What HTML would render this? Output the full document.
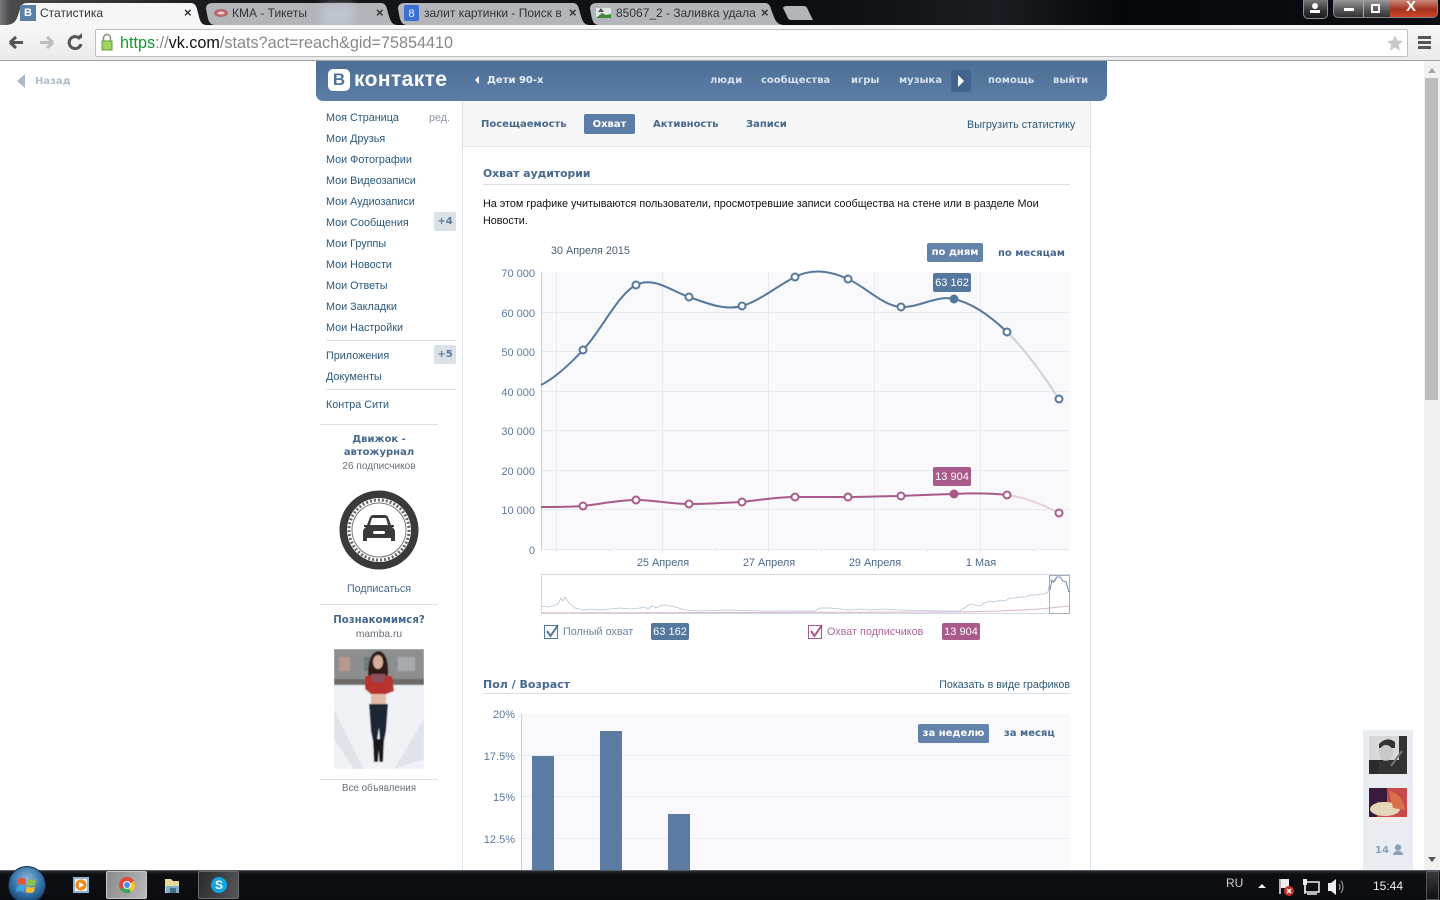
<!DOCTYPE html>
<html><head><meta charset="utf-8"><style>
html,body{margin:0;padding:0;background:#fff;width:1440px;height:900px;overflow:hidden}
body{position:relative;font-family:"Liberation Sans","DejaVu Sans",sans-serif;font-size:11px;color:#2b587a}
.t{position:absolute;white-space:nowrap;line-height:14px;height:14px}
.b{position:absolute}
.bd{font-family:"DejaVu Sans","Liberation Sans",sans-serif;font-weight:bold;font-size:10px}
.m{font-size:10.8px;left:326px;color:#2b587a}
.ax{font-size:11px;color:#5b7a9c;text-align:right;width:60px}
.xl{font-size:10.9px;color:#4a6a8c;text-align:center;width:80px}
.tab{font-size:12px;color:#333}
.x{font-size:12px;color:#333;font-weight:bold}
svg{position:absolute;left:0;top:0}
</style></head><body>
<!-- window frame -->
<div class="b" style="left:0;top:0;width:1440px;height:25px;background:linear-gradient(90deg,#77787a 0,#4a4b4d 10px,#16181b 220px,#0c0e12 800px,#191c20 1000px,#05070b 1120px,#0b0e12 1440px)"></div>
<svg width="1440" height="62">
<path d="M398 25 C391 25 390 20 387 9 C386 5 384 3 381 3 H213 C208 3 206 5 206 9 C208 18 208 25 215 25 Z" fill="#b2b5ba"/>
<path d="M590 25 C583 25 582 20 579 9 C578 5 576 3 573 3 H405 C400 3 398 5 398 9 C400 18 400 25 407 25 Z" fill="#b2b5ba"/>
<path d="M785 25 C776 25 775 20 771 9 C770 5 768 3 765 3 H597 C592 3 590 5 590 9 C592 18 592 25 599 25 Z" fill="#b2b5ba"/>
<path d="M207 25 C200 25 200 20 197 9 C196 5 194 3 191 3 H27 C23 3 21 5 20 9 C17 20 15 25 5 25 Z" fill="#f6f6f6"/>
<path d="M787 6 H803 C806 6 807 7 808 10 L813 20 H792 C789 20 788 19 787 16 L783 8 C783 7 785 6 787 6 Z" fill="#b2b5ba"/>
</svg>
<div class="b" style="left:20px;top:5px;width:16px;height:16px;background:#5b7fa6;color:#fff;font:bold 11px/16px 'Liberation Sans';text-align:center">В</div>
<div class="t tab" style="left:40px;top:6px">Статистика</div>
<div class="t x" style="left:184px;top:6px;font-size:13px">×</div>
<svg width="20" height="20" style="left:212px;top:4px"><ellipse cx="9" cy="9" rx="7" ry="4" fill="#b86a6a"/><ellipse cx="9" cy="9" rx="3.5" ry="1.5" fill="#e8d0d0"/></svg>
<div class="t tab" style="left:232px;top:6px">КМА - Тикеты</div>
<div class="b" style="left:322px;top:5px;width:32px;height:20px;background:#bfc4cf;filter:blur(4px)"></div>
<div class="t x" style="left:376px;top:6px;font-size:13px">×</div>
<div class="b" style="left:404px;top:5px;width:15px;height:16px;background:#3b6fd0;color:#fff;font:12px/16px 'Liberation Serif';text-align:center;border-radius:2px">8</div>
<div class="t tab" style="left:424px;top:6px;width:140px;overflow:hidden">залит картинки - Поиск в</div>
<div class="t x" style="left:569px;top:6px;font-size:13px">×</div>
<svg width="18" height="14" style="left:595px;top:6px"><rect x="1" y="2" width="15" height="10" fill="#dfe6e8"/><path d="M1 12 L7 7 L11 9 L16 8 V12 Z" fill="#3f8a3a"/><path d="M3 6 L6 2 L9 6 Z" fill="#555"/></svg>
<div class="t tab" style="left:616px;top:6px;width:140px;overflow:hidden">85067_2 - Заливка удалас</div>
<div class="t x" style="left:761px;top:6px;font-size:13px">×</div>
<!-- window buttons -->
<div class="b" style="left:1303px;top:0;width:23px;height:18px;border:1px solid #8a8f96;border-top:0;border-radius:0 0 5px 5px;background:linear-gradient(#777,#333 60%,#1a1a1a)"></div>
<svg width="18" height="14" style="left:1306px;top:2px"><circle cx="9" cy="4" r="3" fill="#fff"/><rect x="4" y="8" width="10" height="3" fill="#fff"/></svg>
<div class="b" style="left:1333px;top:0;width:103px;height:17px;border:1px solid #888;border-top:0;border-radius:0 0 5px 5px;background:linear-gradient(#9a9a9a,#555 60%,#333);overflow:hidden">
 <div class="b" style="left:29px;top:0;bottom:0;width:1px;background:#aaa"></div>
 <div class="b" style="left:56px;top:0;width:47px;height:17px;background:linear-gradient(#c98a7c,#a5321e 55%,#d0452a)"></div>
 <div class="b" style="left:10px;top:8px;width:10px;height:3px;background:#fff"></div>
 <div class="b" style="left:37px;top:4px;width:5px;height:5px;border:2px solid #fff"></div>
 <div class="b" style="left:72px;top:-1px;color:#fff;font:bold 15px/16px 'Liberation Sans'">X</div>
</div>
<!-- toolbar -->
<div class="b" style="left:0;top:25px;width:1440px;height:35px;background:linear-gradient(#f7f7f7,#ebebeb);border-bottom:1px solid #a3a3a3"></div>
<svg width="100" height="60">
<path d="M10 42.5 H23 M10 42.5 L16 37 M10 42.5 L16 48" stroke="#555" stroke-width="3" fill="none"/>
<path d="M53 42.5 H40 M53 42.5 L47 37 M53 42.5 L47 48" stroke="#bdbdbd" stroke-width="3" fill="none"/>
<path d="M80 39 A6 6 0 1 0 81 44" stroke="#555" stroke-width="3" fill="none"/><path d="M76 38 H82 V33 Z" fill="#555"/>
</svg>
<div class="b" style="left:95px;top:29px;height:26px;background:#fff;border:1px solid #bfbfbf;border-radius:2px;width:1311px"></div>
<svg width="14" height="18" style="left:100px;top:33px"><path d="M3.5 8 V5 A3.5 3.5 0 0 1 10.5 5 V8" stroke="#8a8f7a" stroke-width="1.5" fill="none"/><rect x="2" y="8" width="10" height="9" fill="#9fd45e" stroke="#6a9a3a"/></svg>
<div class="t" style="left:120px;top:35px;font-size:16.2px;line-height:16px;height:16px"><span style="color:#0a9c2a">https</span><span style="color:#888">://</span><span style="color:#111">vk.com</span><span style="color:#888">/stats?act=reach&amp;gid=75854410</span></div>
<svg width="18" height="18" style="left:1386px;top:34px"><path d="M9 1 L11.4 6.4 L17 7 L12.8 10.8 L14 16.5 L9 13.6 L4 16.5 L5.2 10.8 L1 7 L6.6 6.4 Z" fill="#c9c9c9"/></svg>
<div class="b" style="left:1418px;top:36px;width:13px;height:3px;background:#555;box-shadow:0 5px 0 #555,0 10px 0 #555"></div>
<!-- scrollbar -->
<div class="b" style="left:1424px;top:61px;width:16px;height:809px;background:#f1f1f1"></div>
<div class="b" style="left:1425px;top:78px;width:13px;height:322px;background:#bcbcbc"></div>
<svg width="16" height="809" style="left:1424px;top:61px"><path d="M4 12 L8 7 L12 12 Z" fill="#a8a8a8"/><path d="M4 796 L8 801 L12 796 Z" fill="#555"/></svg>
<!-- back -->
<svg width="12" height="16" style="left:15px;top:73px"><path d="M10 1 L2 8 L10 15 Z" fill="#a9b9ca"/></svg>
<div class="t bd" style="left:35px;top:75px;color:#aebccb;font-size:10px">Назад</div>
<!-- header -->
<div class="b" style="left:316px;top:61px;width:791px;height:40px;border-radius:0 0 7px 7px;background:linear-gradient(#4d6e95,#5c7da5)"></div>
<div class="b" style="left:328px;top:69px;width:22px;height:22px;border-radius:5px;background:#fff;color:#50729a;font:bold 17px/22px 'Liberation Sans';text-align:center">В</div>
<div class="t" style="left:354px;top:70px;height:20px;font:bold 21px/20px 'Liberation Sans';color:#fff;letter-spacing:.4px">контакте</div>
<svg width="8" height="10" style="left:473px;top:75px"><path d="M6 1 L2 5 L6 9 Z" fill="#fff"/></svg>
<div class="t bd" style="left:487px;top:74px;color:#e8eef5">Дети 90-х</div>
<div class="t bd" style="left:710px;top:74px;color:#d5e0ec">люди</div>
<div class="t bd" style="left:761px;top:74px;color:#d5e0ec">сообщества</div>
<div class="t bd" style="left:851px;top:74px;color:#d5e0ec">игры</div>
<div class="t bd" style="left:899px;top:74px;color:#d5e0ec">музыка</div>
<div class="b" style="left:951px;top:70px;width:20px;height:22px;background:#43658d;border-radius:3px"></div>
<svg width="10" height="14" style="left:956px;top:74px"><path d="M2 1 L8 7 L2 13 Z" fill="#fff"/></svg>
<div class="t bd" style="left:988px;top:74px;color:#d5e0ec">помощь</div>
<div class="t bd" style="left:1053px;top:74px;color:#d5e0ec">выйти</div>
<!-- sidebar -->
<div class="t m" style="top:111px">Моя Страница</div>
<div class="t" style="left:429px;top:111px;color:#8a97a5;font-size:10.8px">ред.</div>
<div class="t m" style="top:132px">Мои Друзья</div>
<div class="t m" style="top:153px">Мои Фотографии</div>
<div class="t m" style="top:174px">Мои Видеозаписи</div>
<div class="t m" style="top:195px">Мои Аудиозаписи</div>
<div class="t m" style="top:216px">Мои Сообщения</div>
<div class="b bd" style="left:434px;top:212px;width:22px;height:19px;line-height:20px;background:#dae2e8;border-radius:2px;text-align:center;color:#5b7a9c">+4</div>
<div class="t m" style="top:237px">Мои Группы</div>
<div class="t m" style="top:258px">Мои Новости</div>
<div class="t m" style="top:279px">Мои Ответы</div>
<div class="t m" style="top:300px">Мои Закладки</div>
<div class="t m" style="top:321px">Мои Настройки</div>
<div class="b" style="left:326px;top:340px;width:130px;height:1px;background:#dae1e8"></div>
<div class="t m" style="top:349px">Приложения</div>
<div class="b bd" style="left:434px;top:345px;width:22px;height:19px;line-height:20px;background:#dae2e8;border-radius:2px;text-align:center;color:#5b7a9c">+5</div>
<div class="t m" style="top:370px">Документы</div>
<div class="b" style="left:326px;top:389px;width:130px;height:1px;background:#dae1e8"></div>
<div class="t m" style="top:398px">Контра Сити</div>
<div class="b" style="left:320px;top:424px;width:118px;height:1px;background:#dae1e8"></div>
<div class="t bd" style="left:320px;width:118px;text-align:center;top:433px;color:#45688e">Движок -</div>
<div class="t bd" style="left:320px;width:118px;text-align:center;top:446px;color:#45688e">автожурнал</div>
<div class="t" style="left:320px;width:118px;text-align:center;top:460px;color:#666f7a;font-size:10.1px">26 подписчиков</div>
<svg width="84" height="84" style="left:337px;top:488px">
<circle cx="42" cy="42" r="39.5" fill="#3a3a3c"/><circle cx="42" cy="42" r="32" fill="#fff"/><circle cx="42" cy="42" r="30" fill="none" stroke="#666" stroke-width="3" stroke-dasharray="2 2"/><circle cx="42" cy="42" r="27" fill="none" stroke="#777" stroke-width="1"/><circle cx="42" cy="42" r="25" fill="#fff"/>
<path d="M30 37 L33 29 Q34 27 37 27 H47 Q50 27 51 29 L54 37 H57 V39 H55 Q58 41 58 44 V53 H54 V50 H30 V53 H26 V44 Q26 41 29 39 H27 V37 Z" fill="#3a3a3c"/><path d="M33 37 L35 30 H49 L51 37 Z" fill="#fff"/><rect x="36" y="43" width="12" height="3" rx="1.5" fill="#fff"/>
</svg>
<div class="t" style="left:320px;width:118px;text-align:center;top:582px;color:#45688e;font-size:10.7px">Подписаться</div>
<div class="b" style="left:320px;top:604px;width:118px;height:1px;background:#dae1e8"></div>
<div class="t bd" style="left:320px;width:118px;text-align:center;top:614px;color:#45688e;font-size:10.2px">Познакомимся?</div>
<div class="t" style="left:320px;width:118px;text-align:center;top:628px;color:#666f7a;font-size:10.3px">mamba.ru</div>
<svg width="90" height="120" style="left:334px;top:649px">
<defs><filter id="bl"><feGaussianBlur stdDeviation=".5"/></filter></defs>
<g filter="url(#bl)">
<rect width="90" height="120" fill="#f0f2f6"/><rect width="90" height="34" fill="#8d8e90"/><rect x="5" y="8" width="11" height="14" fill="#b79a8c"/><rect x="30" y="8" width="9" height="14" fill="#6f7a80"/><rect x="64" y="8" width="17" height="14" fill="#a8acb0"/><rect y="30" width="90" height="6" fill="#6d6a68"/>
<path d="M0 60 L30 120 H20 L0 90 Z M60 120 L90 70 V110 Z" fill="#dfe3ea"/>
<path d="M34 26 Q34 4 44 2 Q55 3 54 26 L50 30 H38 Z" fill="#2d1a18"/><ellipse cx="44" cy="13" rx="5" ry="7" fill="#d6ad9a"/>
<path d="M31 27 L58 27 L60 42 L50 46 H38 L31 40 Z" fill="#b8302f"/><path d="M37 25 L52 25 L50 33 H38 Z" fill="#8c5060"/>
<rect x="37" y="45" width="15" height="11" fill="#e2bba8"/>
<path d="M35 55 H54 L52 82 L50 92 H46 L45 78 L43 92 H39 L37 82 Z" fill="#1b2636"/>
<path d="M39 90 H50 L49 113 H45.5 L44.5 100 L44 113 H40 Z" fill="#15171c"/>
</g>
</svg>
<div class="b" style="left:320px;top:779px;width:118px;height:1px;background:#dae1e8"></div>
<div class="t" style="left:320px;width:118px;text-align:center;top:782px;color:#666f7a;font-size:9.8px">Все объявления</div>
<!-- main -->
<div class="b" style="left:462px;top:101px;width:1px;height:769px;background:#dae1e8"></div>
<div class="b" style="left:1090px;top:101px;width:1px;height:769px;background:#dae1e8"></div>
<div class="b" style="left:463px;top:101px;width:627px;height:45px;background:#f7f7f7;border-bottom:1px solid #e4e8ed"></div>
<div class="t bd" style="left:481px;top:118px;color:#45688e">Посещаемость</div>
<div class="b bd" style="left:584px;top:114px;width:51px;height:20px;line-height:21px;background:#5c7da5;color:#fff;border-radius:2px;text-align:center">Охват</div>
<div class="t bd" style="left:653px;top:118px;color:#45688e">Активность</div>
<div class="t bd" style="left:746px;top:118px;color:#45688e">Записи</div>
<div class="t" style="left:967px;top:118px;color:#2b587a;font-size:10.8px">Выгрузить статистику</div>
<div class="t bd" style="left:483px;top:167px;color:#45688e;font-size:10.8px">Охват аудитории</div>
<div class="b" style="left:483px;top:184px;width:587px;height:1px;background:#dae1e8"></div>
<div class="t" style="left:483px;top:197px;color:#111;font-size:10.8px">На этом графике учитываются пользователи, просмотревшие записи сообщества на стене или в разделе Мои</div>
<div class="t" style="left:483px;top:214px;color:#111;font-size:10.8px">Новости.</div>
<div class="t" style="left:551px;top:244px;color:#4a5d72;font-size:10.8px">30 Апреля 2015</div>
<!-- chart -->
<svg width="1440" height="900" style="pointer-events:none">
<rect x="541" y="272" width="529" height="277" fill="#f9f9fb"/>
<g stroke="#e6e9ef" stroke-width="1">
<path d="M541 312.5H1070M541 351.5H1070M541 391.5H1070M541 430.5H1070M541 470.5H1070M541 509.5H1070M541 549.5H1070"/>
<path d="M556.5 272V549M662.5 272V549M768.5 272V549M874.5 272V549M980.5 272V549"/>
<path d="M556.5 549V553M609.5 549V552M662.5 549V553M715.5 549V552M768.5 549V553M821.5 549V552M874.5 549V553M927.5 549V552M980.5 549V553M1033.5 549V552"/>
</g>
<path d="M541.5 272V549" stroke="#c3ccd8"/>
<path d="M1007 332 C1024.3 349,1042 373,1059 399" fill="none" stroke="#c8d2de" stroke-width="2"/>
<path d="M541 385 C555 378,570 364,583 350 C600.7 331.5,618.3 293.8,636 285 C653.7 276,671.3 291,689 297 C706.7 303,724.3 311,742 306 C759.7 301,777.3 285.8,795 277 C812.7 268,830.3 271,848 279 C865.7 287,883.3 306,901 307 C918.7 308,936.3 294.8,954 299 C971.7 303,989.3 315,1007 332" fill="none" stroke="#55779e" stroke-width="2"/>
<g fill="#fff" stroke="#55779e" stroke-width="2"><circle cx="583" cy="350" r="3.5"/><circle cx="636" cy="285" r="3.5"/><circle cx="689" cy="297" r="3.5"/><circle cx="742" cy="306" r="3.5"/><circle cx="795" cy="277" r="3.5"/><circle cx="848" cy="279" r="3.5"/><circle cx="901" cy="307" r="3.5"/><circle cx="1007" cy="332" r="3.5"/><circle cx="1059" cy="399" r="3.5"/></g>
<circle cx="954" cy="299" r="4.5" fill="#55779e"/>
<path d="M1007 495 C1024 497,1042 504,1059 513" fill="none" stroke="#e8cfdc" stroke-width="2"/>
<path d="M541 507 C555 507,570 507,583 506 C601 504,618 500,636 500 C654 500,671 504,689 504 C707 504,724 503,742 502 C760 500,777 497,795 497 C813 497,830 497,848 497 C866 497,883 496,901 496 C919 495,936 494.5,954 494 C972 493,989 493,1007 495" fill="none" stroke="#aa5a8a" stroke-width="2"/>
<g fill="#fff" stroke="#aa5a8a" stroke-width="2"><circle cx="583" cy="506" r="3.5"/><circle cx="636" cy="500" r="3.5"/><circle cx="689" cy="504" r="3.5"/><circle cx="742" cy="502" r="3.5"/><circle cx="795" cy="497" r="3.5"/><circle cx="848" cy="497" r="3.5"/><circle cx="901" cy="496" r="3.5"/><circle cx="1007" cy="495" r="3.5"/><circle cx="1059" cy="513" r="3.5"/></g>
<circle cx="954" cy="494" r="4.5" fill="#aa5a8a"/>
<!-- nav chart -->
<path d="M541.5 574.5H1069.5V613.5H541.5Z" fill="none" stroke="#d3dae3"/>
<polyline points="541,606 548,607 553,606 558,604 561,598 563,601 565,597 569,603 575,608 583,610 592,609 600,610 610,609 620,608 630,609 640,608 645,607 648,609 652,606 656,608 660,606 665,605 670,606 675,607 685,610 700,611 730,610 760,611 800,611 815,611 820,608 830,608 840,609 850,610 860,609 870,610 885,609 900,610 940,611 960,611 966,607 970,604 975,605 980,606 984,603 990,601 995,602 1000,600 1005,601 1010,598 1015,598 1020,597 1025,597 1030,595 1036,595 1040,594 1044,594 1048,592 1050,580 1053,583 1056,577 1060,577 1063,581 1066,582 1069,592" fill="none" stroke="#b4c3d4" stroke-width=".8"/>
<polyline points="541,613 960,612 1000,611 1040,609 1069,606" fill="none" stroke="#d9b6ca"/>
<rect x="1049.5" y="575.5" width="20" height="38" fill="none" stroke="#a5aeb9"/>
<polyline points="1050,590 1052,580 1054,582 1057,577 1060,577 1063,581 1066,582 1069,592" fill="none" stroke="#5b7a9c" stroke-width=".8"/>
<!-- bars chart -->
<rect x="521" y="714" width="549" height="156" fill="#f9f9fb"/>
<path d="M521 755.5H1070M521 796.5H1070M521 838.5H1070" stroke="#e8ebf0"/>
<path d="M521.5 714V870" stroke="#c3ccd8"/>
<rect x="532" y="756" width="22" height="114" fill="#5b7ba3"/><rect x="600" y="731" width="22" height="139" fill="#5b7ba3"/><rect x="668" y="814" width="22" height="56" fill="#5b7ba3"/>
<!-- checkboxes -->
<rect x="544.5" y="625.5" width="13" height="13" fill="#fff" stroke="#55779e"/><path d="M547 631 L550.5 636 L558 625" fill="none" stroke="#55779e" stroke-width="2"/>
<rect x="808.5" y="625.5" width="13" height="13" fill="#fff" stroke="#aa5a8a"/><path d="M811 631 L814.5 636 L822 625" fill="none" stroke="#aa5a8a" stroke-width="2"/>
</svg>
<div class="t ax" style="left:475px;top:267px">70 000</div>
<div class="t ax" style="left:475px;top:307px">60 000</div>
<div class="t ax" style="left:475px;top:346px">50 000</div>
<div class="t ax" style="left:475px;top:386px">40 000</div>
<div class="t ax" style="left:475px;top:425px">30 000</div>
<div class="t ax" style="left:475px;top:465px">20 000</div>
<div class="t ax" style="left:475px;top:504px">10 000</div>
<div class="t ax" style="left:475px;top:544px">0</div>
<div class="t xl" style="left:623px;top:556px">25 Апреля</div>
<div class="t xl" style="left:729px;top:556px">27 Апреля</div>
<div class="t xl" style="left:835px;top:556px">29 Апреля</div>
<div class="t xl" style="left:941px;top:556px">1 Мая</div>
<div class="b bd" style="left:927px;top:243px;width:56px;height:19px;line-height:20px;background:#6383aa;color:#fff;border-radius:2px;text-align:center">по дням</div>
<div class="t bd" style="left:998px;top:246px;color:#45688e;line-height:15px">по месяцам</div>
<div class="b" style="left:933px;top:273px;width:38px;height:19px;line-height:20px;background:#55779e;color:#fff;border-radius:2px;text-align:center;font-size:11px">63 162</div>
<div class="b" style="left:933px;top:467px;width:38px;height:19px;line-height:20px;background:#aa5a8a;color:#fff;border-radius:2px;text-align:center;font-size:11px">13 904</div>
<div class="t" style="left:563px;top:625px;color:#6a85a3;font-size:10.8px">Полный охват</div>
<div class="b" style="left:651px;top:623px;width:38px;height:17px;line-height:18px;background:#55779e;color:#fff;border-radius:2px;text-align:center;font-size:11px">63 162</div>
<div class="t" style="left:827px;top:625px;color:#aa6a92;font-size:10.8px">Охват подписчиков</div>
<div class="b" style="left:942px;top:623px;width:38px;height:17px;line-height:18px;background:#aa5a8a;color:#fff;border-radius:2px;text-align:center;font-size:11px">13 904</div>
<div class="t bd" style="left:483px;top:678px;color:#45688e;font-size:11px">Пол / Возраст</div>
<div class="t" style="left:870px;width:200px;text-align:right;top:678px;color:#2b587a;font-size:10.7px">Показать в виде графиков</div>
<div class="b" style="left:483px;top:693px;width:587px;height:1px;background:#dae1e8"></div>
<div class="t ax" style="left:455px;top:708px">20%</div>
<div class="t ax" style="left:455px;top:750px">17.5%</div>
<div class="t ax" style="left:455px;top:791px">15%</div>
<div class="t ax" style="left:455px;top:833px">12.5%</div>
<div class="b bd" style="left:918px;top:724px;width:71px;height:19px;line-height:20px;background:#6383aa;color:#fff;border-radius:2px;text-align:center">за неделю</div>
<div class="t bd" style="left:1004px;top:727px;color:#45688e">за месяц</div>
<!-- chat -->
<div class="b" style="left:1363px;top:730px;width:50px;height:140px;background:#e9edf2"></div>
<svg width="38" height="86" style="left:1369px;top:736px">
<rect width="38" height="38" fill="#d8d8d8"/><rect x="0" y="24" width="38" height="14" fill="#2a2a2a"/><rect x="30" width="8" height="38" fill="#333"/><path d="M10 8 Q18 0 26 6 L26 12 H10 Z" fill="#333"/><ellipse cx="17" cy="17" rx="7" ry="8" fill="#c8c8c8"/><path d="M8 38 L10 25 L30 24 L34 38 Z" fill="#333"/><path d="M22 30 L33 15" stroke="#777" stroke-width="2"/>
<rect y="52" width="38" height="34" fill="#c94a4a"/><rect y="52" width="18" height="14" fill="#3a1a3a"/><rect y="66" width="8" height="16" fill="#3a1a3a"/><ellipse cx="16" cy="73" rx="15" ry="7" fill="#e4d6b8"/><rect y="81" width="38" height="5" fill="#f4ece8"/><path d="M20 55 Q34 58 36 74 L24 72 Z" fill="#d9704a"/>
</svg>
<div class="t bd" style="left:1375px;top:844px;color:#87a0bc;font-size:10px">14</div>
<svg width="12" height="12" style="left:1392px;top:844px"><circle cx="6" cy="3.5" r="3.2" fill="#87a0bc"/><path d="M1 11 Q1 7 6 7 Q11 7 11 11 Z" fill="#87a0bc"/></svg>
<!-- taskbar -->
<div class="b" style="left:0;top:870px;width:1440px;height:30px;background:linear-gradient(#2a2d31 0,#0d0f13 3px,#0a0c10 100%);border-top:1px solid #555a60;box-sizing:border-box"></div>
<svg width="48" height="40" style="left:3px;top:862px">
<defs><radialGradient id="o" cx=".5" cy=".35" r=".7"><stop offset="0" stop-color="#8fb8d8"/><stop offset=".6" stop-color="#2f6ea5"/><stop offset="1" stop-color="#123a60"/></radialGradient></defs>
<circle cx="24" cy="23" r="18.5" fill="url(#o)" stroke="#1a2a3a"/>
<path d="M15 17 Q19 15 23 17 L22 23 Q18 21 14 23 Z" fill="#e2573a"/><path d="M24.5 17 Q28 19 33 17 L32 23 Q28 25 23.5 23 Z" fill="#8cc34b"/><path d="M14 24.5 Q18 22.5 22 24.5 L21 30 Q17 28 13 30 Z" fill="#3fa4e0"/><path d="M23.5 24.5 Q28 26.5 32 24.5 L31 30 Q27 32 22.5 30 Z" fill="#f4bc2c"/>
</svg>
<svg width="18" height="18" style="left:72px;top:876px"><rect x="1" y="1" width="16" height="16" fill="#8fb5d0"/><rect x="3" y="3" width="12" height="12" fill="#f5f5f0"/><circle cx="9" cy="9" r="5.5" fill="#f08a1c"/><path d="M7 6 L12 9 L7 12 Z" fill="#fff"/></svg>
<div class="b" style="left:106px;top:871px;width:41px;height:28px;background:linear-gradient(110deg,#8a8a8a,#b9b9b9);border:1px solid #c8c8c8;box-sizing:border-box;border-radius:2px"></div>
<svg width="20" height="20" style="left:117px;top:875px"><circle cx="10" cy="10" r="8" fill="#dd4b3e"/><path d="M3 14 A8 8 0 0 0 14 17 L10 10 Z" fill="#3aa757"/><path d="M18 10 A8 8 0 0 1 14 17 L10 10 L17 6 Z" fill="#f9c82e"/><circle cx="10" cy="10" r="4" fill="#fff"/><circle cx="10" cy="10" r="3" fill="#4a8be8"/></svg>
<svg width="18" height="18" style="left:164px;top:877px"><path d="M1 2 H7 L9 4 H15 V16 H1 Z" fill="#e9d898"/><rect x="2" y="9" width="13" height="7" fill="#7fb0c8"/><rect x="6" y="11" width="6" height="5" fill="#3f6f8a"/></svg>
<div class="b" style="left:198px;top:871px;width:41px;height:28px;background:linear-gradient(110deg,#2a2b2d,#55575a);border:1px solid #6a6c6f;box-sizing:border-box;border-radius:2px"></div>
<div class="b" style="left:211px;top:877px;width:16px;height:16px;border-radius:50%;background:#12a5e2;color:#fff;font:bold 12px/16px 'Liberation Sans';text-align:center">S</div>
<div class="t" style="left:1226px;top:876px;color:#d0d0d0;font-size:12px">RU</div>
<svg width="200" height="30" style="left:1255px;top:870px">
<path d="M3 18 L7 14 L11 18 Z" fill="#eee"/>
<path d="M25 9 V24" stroke="#eee" stroke-width="1.5"/><path d="M26 9 H34 V18 H26 Z" fill="#eee"/><circle cx="34" cy="21" r="5" fill="#c8312a"/><path d="M32 19 L36 23 M36 19 L32 23" stroke="#fff" stroke-width="1.5"/>
<rect x="50" y="12" width="14" height="10" fill="none" stroke="#eee" stroke-width="1.5"/><rect x="48" y="9" width="4" height="6" fill="#eee"/><path d="M50 16 V24 M52 24 H62" stroke="#eee" stroke-width="1.5"/>
<path d="M73 13 H76 L81 9 V25 L76 21 H73 Z" fill="#eee"/><path d="M84 14 Q86 17 84 20 M86 11 Q90 17 86 23" stroke="#aaa" fill="none"/>
</svg>
<div class="t" style="left:1373px;top:879px;color:#eee;font-size:12px">15:44</div>
<div class="b" style="left:1426px;top:871px;width:13px;height:29px;background:linear-gradient(#3a3a3c,#111);border:1px solid #55585c;box-sizing:border-box"></div>
</body></html>
